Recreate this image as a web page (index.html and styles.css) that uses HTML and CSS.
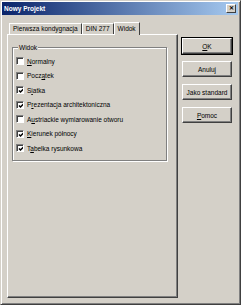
FILE: index.html
```html
<!DOCTYPE html>
<html lang="pl">
<head>
    <meta charset="UTF-8">
    <title>Nowy Projekt</title>
    <link rel="stylesheet" href="styles.css">
</head>
<body>
    <div class="window">
        <div class="titlebar">
            <span class="title">Nowy Projekt</span>
            <span class="close">&#x2715;</span>
        </div>
        <div class="main">
            <div class="tabs">
                <div class="tabstrip">
                    <div class="tab">Pierwsza kondygnacja</div>
                    <div class="tab">DIN 277</div>
                    <div class="tab active">Widok</div>
                </div>
                <div class="panel">
                    <fieldset class="group">
                        <legend>Widok</legend>
                        <div class="row"><span class="box"></span><span><u>N</u>ormalny</span></div>
                        <div class="row"><span class="box"></span><span>Pocz<u>ą</u>tek</span></div>
                        <div class="row"><span class="box checked"></span><span>S<u>i</u>atka</span></div>
                        <div class="row"><span class="box checked"></span><span>P<u>r</u>ezentacja architektoniczna</span></div>
                        <div class="row"><span class="box"></span><span>A<u>u</u>striackie wymiarowanie otworu</span></div>
                        <div class="row"><span class="box checked"></span><span><u>K</u>ierunek północy</span></div>
                        <div class="row"><span class="box checked"></span><span>T<u>a</u>belka rysunkowa</span></div>
                    </fieldset>
                </div>
            </div>
            <div class="buttons">
                <button class="default"><u>O</u>K</button>
                <button>Anuluj</button>
                <button>Jako standard</button>
                <button><u>P</u>omoc</button>
            </div>
        </div>
    </div>
</body>
</html>
```

FILE: styles.css
```css
:root {
    --face: #d4d0c8;
    --shadow: #808080;
    --dark: #404040;
}

* {
    margin: 0;
    padding: 0;
    box-sizing: border-box;
}

body {
    background: var(--face);
    font-family: 'Liberation Sans', Arial, sans-serif;
    font-size: 6.5px;
    color: #000;
}

u {
    text-decoration-thickness: 1px;
    text-underline-offset: 1px;
}

.window {
    width: 241px;
    height: 305px;
    border: 1px solid;
    border-color: var(--face) var(--dark) var(--dark) var(--face);
    box-shadow: inset 1px 1px #fff, inset -1px -1px var(--shadow);
    padding: 1px 2px 2px 1px;
}

.titlebar {
    height: 13px;
    background: linear-gradient(to right, #0a246a, #a6caf0);
    display: flex;
    align-items: center;
    justify-content: space-between;
    padding: 0 2px 0 2px;
}

.title {
    color: #fff;
    font-weight: bold;
    font-size: 6.5px;
}

.close {
    width: 10px;
    height: 9px;
    background: var(--face);
    border: 1px solid;
    border-color: #fff var(--dark) var(--dark) #fff;
    font-size: 6px;
    font-weight: bold;
    line-height: 7px;
    text-align: center;
}

.main {
    display: flex;
    padding: 6px 0 0 5px;
}

.tabs {
    width: 171px;
}

.tabstrip {
    display: flex;
    align-items: flex-end;
    height: 13px;
    padding-left: 2px;
}

.tab {
    height: 11px;
    line-height: 10px;
    padding: 0 3px;
    border: 1px solid;
    border-bottom: none;
    border-color: #fff var(--dark) transparent #fff;
    white-space: nowrap;
}

.tab.active {
    height: 13px;
    line-height: 11px;
    margin-bottom: -1px;
    background: var(--face);
    position: relative;
    z-index: 1;
}

.panel {
    height: 264px;
    border: 1px solid;
    border-color: #fff var(--dark) var(--dark) #fff;
    box-shadow: inset -1px -1px var(--shadow);
    padding: 8px 10px 0 4px;
}

.group {
    height: 118px;
    border: 1px solid var(--shadow);
    box-shadow: 1px 1px #fff, inset 1px 1px #fff;
    padding: 2px 0 0 3px;
}

.group legend {
    margin-left: 2px;
    padding: 0 1px;
    background: var(--face);
    line-height: 9px;
}

.row {
    display: flex;
    align-items: center;
    gap: 3px;
    height: 14.5px;
    white-space: nowrap;
}

.box {
    width: 8px;
    height: 8px;
    flex: none;
    background: #fff;
    border: 1px solid;
    border-color: var(--shadow) #fff #fff var(--shadow);
    box-shadow: inset 1px 1px var(--dark);
}

.box.checked {
    background: #fff url("data:image/svg+xml,%3Csvg xmlns='http://www.w3.org/2000/svg' width='6' height='6'%3E%3Cpath d='M1 2.5 L2.5 4 L5.5 1' fill='none' stroke='black' stroke-width='1.5'/%3E%3C/svg%3E") no-repeat 1px 1px;
}

.buttons {
    display: flex;
    flex-direction: column;
    gap: 7px;
    margin-left: 4px;
    padding-top: 17px;
}

button {
    width: 50px;
    height: 16px;
    font: inherit;
    background: var(--face);
    border: 1px solid;
    border-color: #fff var(--dark) var(--dark) #fff;
    box-shadow: inset -1px -1px var(--shadow);
}

button.default {
    outline: 1px solid #000;
    outline-offset: 0;
}
```
